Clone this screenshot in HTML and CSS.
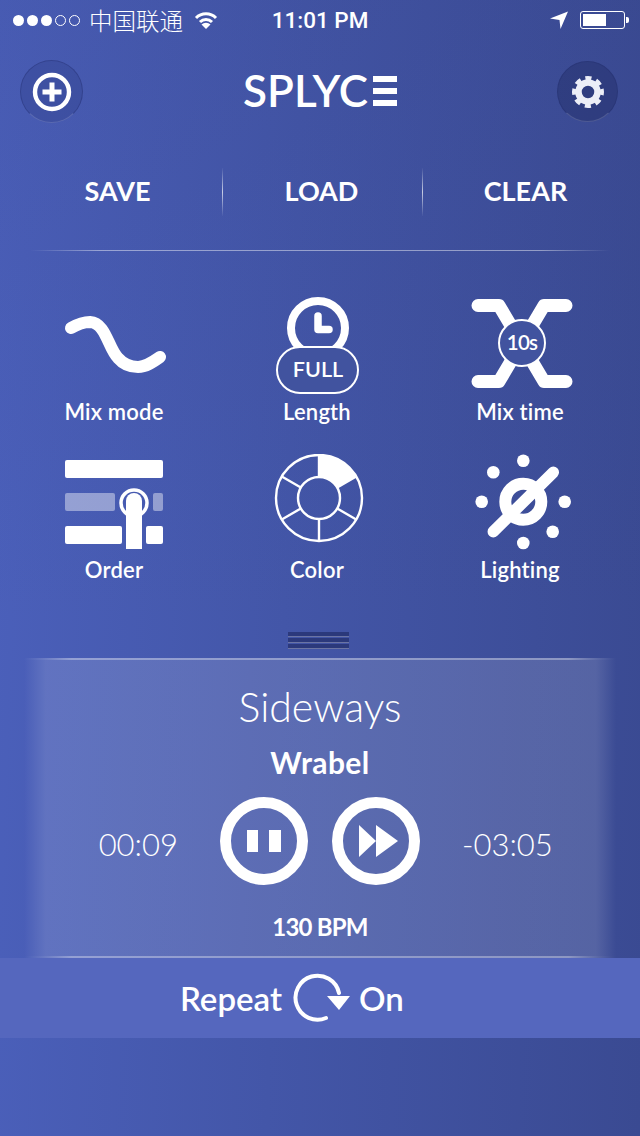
FILE: index.html
```html
<!DOCTYPE html>
<html lang="en">
<head>
    <meta charset="UTF-8">
    <meta name="viewport" content="width=device-width, initial-scale=1.0">
    <title>Splyce</title>
    <link rel="stylesheet" href="styles.css">
</head>
<body>
    <div class="status-bar">
        <div class="status-left">
            <span class="dot"></span><span class="dot"></span><span class="dot"></span><span class="dot empty"></span><span class="dot empty"></span>
            <span class="carrier">中国联通</span>
            <svg class="wifi" width="24" height="18" viewBox="0 0 24 18">
                <path d="M2 7 A14 14 0 0 1 22 7" class="wifi-arc"/>
                <path d="M6 11 A8.5 8.5 0 0 1 18 11" class="wifi-arc"/>
                <path d="M12 18 L7.5 13.5 A6.5 6.5 0 0 1 16.5 13.5 Z" fill="#fff"/>
            </svg>
        </div>
        <div class="clock">11:01 PM</div>
        <div class="status-right">
            <svg width="18" height="18" viewBox="0 0 18 18"><path d="M18 0.5 L0 7.5 L9.5 9 L10.5 18 Z" fill="#fff"/></svg>
            <div class="battery"><div class="battery-level"></div></div>
            <div class="battery-nub"></div>
        </div>
    </div>

    <div class="header">
        <button class="round-btn">
            <svg width="42" height="42" viewBox="0 0 42 42">
                <circle cx="21" cy="21" r="17" class="ring"/>
                <path d="M21 11.5 V30.5 M11.5 21 H30.5" class="plus"/>
            </svg>
        </button>
        <div class="logo">SPLYC<span class="logo-e"><i></i><i></i><i></i></span></div>
        <button class="round-btn dark">
            <svg width="36" height="36" viewBox="0 0 36 36">
                <circle cx="18" cy="18" r="13.5" class="gear-teeth" transform="rotate(-12.3 18 18)"/>
                <circle cx="18" cy="18" r="9.5" class="gear-body"/>
            </svg>
        </button>
    </div>

    <div class="tabs">
        <div class="tab">SAVE</div>
        <div class="tab">LOAD</div>
        <div class="tab">CLEAR</div>
    </div>

    <div class="rule"></div>

    <div class="options">
        <div class="option">
            <svg class="icon" viewBox="0 0 111 100">
                <path d="M11 32 C18 28 24 26 30 26 C46 27 48 52 58 62 C64 69 71 71 78 71 C86 71 93 66 100 61" class="line" stroke-width="12"/>
            </svg>
            <div class="label">Mix mode</div>
        </div>
        <div class="option">
            <svg class="icon" viewBox="0 0 111 100">
                <circle cx="55" cy="32" r="27" class="line" stroke-width="8"/>
                <path d="M55 20 V33.5 H66" class="line" stroke-width="7.5"/>
                <rect x="14" y="51" width="81" height="46" rx="23" class="pill"/>
                <text x="55" y="81" class="icon-text" font-size="21.5">FULL</text>
            </svg>
            <div class="label">Length</div>
        </div>
        <div class="option">
            <svg class="icon" viewBox="0 0 111 100">
                <path d="M12 9.5 H33 L78 85.5 H100 M100 9.5 H78 L33 85.5 H12" class="line" stroke-width="13"/>
                <circle cx="56" cy="47" r="23" class="pill"/>
                <text x="56" y="54" class="icon-text tight" font-size="20.5">10s</text>
            </svg>
            <div class="label">Mix time</div>
        </div>
        <div class="option">
            <svg class="icon" viewBox="0 0 111 100">
                <rect x="5" y="6" width="98" height="18" rx="2" fill="#fff"/>
                <rect x="5" y="39" width="50" height="18" rx="2" fill="#fff" opacity="0.42"/>
                <rect x="93" y="39" width="10" height="18" rx="2" fill="#fff" opacity="0.42"/>
                <rect x="5" y="72" width="57" height="18" rx="2" fill="#fff"/>
                <rect x="86" y="72" width="17" height="18" rx="2" fill="#fff"/>
                <circle cx="74" cy="49" r="13" class="line" stroke-width="3.5"/>
                <path d="M66 47 A8 8 0 0 1 82 47 V95 H66 Z" fill="#fff"/>
            </svg>
            <div class="label">Order</div>
        </div>
        <div class="option">
            <svg class="icon" viewBox="0 0 111 100">
                <circle cx="56" cy="44" r="43" class="line" stroke-width="2.4"/>
                <circle cx="56" cy="44" r="21" class="line" stroke-width="2.4"/>
                <path d="M56 1 V23 M93.2 22.5 L74.2 33.5 M93.2 65.5 L74.2 54.5 M56 87 V65 M18.8 65.5 L37.8 54.5 M18.8 22.5 L37.8 33.5" class="line butt" stroke-width="2.4"/>
                <path d="M56 1 A43 43 0 0 1 93.2 22.5 L74.2 33.5 A21 21 0 0 0 56 23 Z" fill="#fff"/>
            </svg>
            <div class="label">Color</div>
        </div>
        <div class="option">
            <svg class="icon" viewBox="0 0 111 100">
                <circle cx="57.3" cy="47.7" r="18" class="line" stroke-width="12"/>
                <path d="M27.3 77.7 L87.3 18.3" class="line" stroke-width="11.5"/>
                <g fill="#fff">
                    <circle cx="57.3" cy="6.7" r="6.3"/>
                    <circle cx="57.3" cy="89" r="6.3"/>
                    <circle cx="15.7" cy="47.7" r="6.3"/>
                    <circle cx="98.7" cy="47.7" r="6.3"/>
                    <circle cx="27.3" cy="18.3" r="6.3"/>
                    <circle cx="86.7" cy="77.7" r="6.3"/>
                </g>
            </svg>
            <div class="label">Lighting</div>
        </div>
    </div>

    <div class="handle"><span></span><span></span><span></span></div>

    <div class="glow-line"></div>
    <div class="player">
        <div class="song">Sideways</div>
        <div class="artist">Wrabel</div>
        <div class="controls">
            <div class="time left">00:09</div>
            <div class="buttons">
                <svg width="88" height="88" viewBox="0 0 88 88">
                    <circle cx="44" cy="44" r="38.5" class="line" stroke-width="11"/>
                    <rect x="27" y="33" width="11" height="22" fill="#fff"/>
                    <rect x="49" y="33" width="12" height="22" fill="#fff"/>
                </svg>
                <svg width="88" height="88" viewBox="0 0 88 88">
                    <circle cx="44" cy="44" r="38.5" class="line" stroke-width="11"/>
                    <path d="M27 28 L44 44 L44 28 L66 44 L44 60 L44 44 L27 60 Z" fill="#fff"/>
                </svg>
            </div>
            <div class="time right">-03:05</div>
        </div>
        <div class="bpm">130 BPM</div>
    </div>
    <div class="glow-line"></div>

    <div class="repeat">
        <span>Repeat</span>
        <svg class="repeat-icon" width="60" height="50" viewBox="0 0 60 50">
            <path d="M34 46 A22 22 0 1 1 47 21" class="line" stroke-width="4"/>
            <path d="M35 24 H58 L47 38 Z" fill="#fff"/>
        </svg>
        <span>On</span>
    </div>
</body>
</html>
```

FILE: styles.css
```css
html, body {
    height: 100%;
}
body {
    margin: 0;
    width: 640px;
    height: 1136px;
    overflow: hidden;
    color: #fff;
    font-family: Lato, sans-serif;
    background:
        linear-gradient(180deg, rgba(50, 60, 125, 0.14), transparent 55%),
        linear-gradient(92deg, #4b60bb 0%, #4356a8 45%, #3a4a92 100%);
}
.status-bar {
    display: grid;
    grid-template-columns: 1fr auto 1fr;
    align-items: center;
    height: 40px;
    padding: 0 11px 0 13px;
}
.status-left, .status-right {
    display: flex;
    align-items: center;
}
.status-right {
    justify-content: flex-end;
}
.dot {
    width: 11px;
    height: 11px;
    margin-right: 3px;
    border-radius: 50%;
    background: #fff;
    box-sizing: border-box;
}
.dot.empty {
    background: none;
    border: 1px solid #fff;
}
.carrier {
    margin-left: 6px;
    font-family: "Noto Sans CJK SC", sans-serif;
    font-size: 23.5px;
    font-weight: 300;
    line-height: 40px;
}
.wifi {
    margin-left: 11px;
}
.wifi-arc {
    fill: none;
    stroke: #fff;
    stroke-width: 3;
}
.clock {
    margin-left: -2px;
    font-family: Roboto, sans-serif;
    font-size: 22.5px;
    font-weight: 500;
}
.battery {
    width: 45px;
    height: 18px;
    margin-left: 12px;
    padding: 2px;
    border: 1px solid #fff;
    border-radius: 3px;
    box-sizing: border-box;
}
.battery-level {
    width: 23px;
    height: 100%;
    background: #fff;
}
.battery-nub {
    width: 3px;
    height: 6px;
    margin-left: 1px;
    border-radius: 0 2px 2px 0;
    background: #fff;
}

.header {
    display: flex;
    align-items: center;
    justify-content: space-between;
    height: 63px;
    margin-top: 20px;
    padding: 0 22px 0 20px;
}
.round-btn {
    display: flex;
    align-items: center;
    justify-content: center;
    width: 63px;
    height: 63px;
    padding: 0;
    border: 1px solid rgba(35, 45, 110, 0.4);
    border-bottom-color: rgba(255, 255, 255, 0.15);
    border-radius: 50%;
    background: rgba(40, 55, 125, 0.28);
}
.round-btn.dark {
    width: 61px;
    height: 61px;
    background: rgba(30, 40, 95, 0.38);
}
.ring {
    fill: none;
    stroke: #fff;
    stroke-width: 4.4;
}
.plus {
    fill: none;
    stroke: #fff;
    stroke-width: 5;
}
.gear-teeth {
    fill: none;
    stroke: #eceef7;
    stroke-width: 5;
    stroke-dasharray: 5.8 4.8;
}
.gear-body {
    fill: none;
    stroke: #eceef7;
    stroke-width: 6.5;
}
.logo {
    display: flex;
    align-items: center;
    padding-bottom: 2px;
    font-size: 44px;
    line-height: 61px;
    font-weight: 600;
}
.logo-e {
    display: flex;
    flex-direction: column;
    gap: 6px;
    width: 24px;
    margin-left: 5px;
}
.logo-e i {
    height: 6px;
    background: #fff;
}

.tabs {
    display: grid;
    grid-template-columns: 209px 198px 208px;
    height: 48px;
    margin-top: 45px;
    padding-left: 13px;
}
.tab {
    display: flex;
    align-items: center;
    justify-content: center;
    padding-bottom: 4px;
    font-size: 27px;
    font-weight: 700;
}
.tab + .tab {
    border-left: 1px solid;
    border-image: linear-gradient(transparent, rgba(255, 255, 255, 0.7), transparent) 1;
}
.tab:last-child {
    margin-left: 2px;
}
.rule {
    height: 1px;
    margin: 34px 30px 0;
    background: linear-gradient(90deg, transparent, rgba(255, 255, 255, 0.45) 12%, rgba(255, 255, 255, 0.45) 88%, transparent);
}

.options {
    display: grid;
    grid-template-columns: repeat(3, 203px);
    row-gap: 30px;
    margin-top: 45px;
    padding-left: 14px;
}
.option {
    display: flex;
    flex-direction: column;
    align-items: center;
}
.icon {
    display: block;
    width: 111px;
    height: 100px;
}
.line {
    fill: none;
    stroke: #fff;
    stroke-linecap: round;
    stroke-linejoin: round;
}
.line.butt {
    stroke-linecap: butt;
}
.pill {
    fill: #41539f;
    stroke: #fff;
    stroke-width: 2;
}
.icon-text {
    fill: #fff;
    font-family: Lato, sans-serif;
    font-weight: 600;
    text-anchor: middle;
}
.icon-text.tight {
    letter-spacing: -0.8px;
}
.label {
    margin-top: 4px;
    padding-right: 3px;
    font-size: 22px;
    font-weight: 600;
    letter-spacing: 0.2px;
    line-height: 24px;
}

.handle {
    display: flex;
    flex-direction: column;
    gap: 1px;
    width: 61px;
    margin: 50px auto 0 288px;
}
.handle span {
    height: 4px;
    border-bottom: 1px solid rgba(255, 255, 255, 0.3);
    background: rgba(25, 35, 90, 0.55);
}
.glow-line {
    height: 2px;
    margin: 0 24px;
    background: linear-gradient(90deg, transparent, rgba(255, 255, 255, 0.42) 8%, rgba(255, 255, 255, 0.42) 92%, transparent);
}
.handle + .glow-line {
    margin-top: 9px;
}
.player {
    height: 296px;
    background: linear-gradient(90deg, transparent 24px, rgba(255, 255, 255, 0.135) 46px, rgba(255, 255, 255, 0.135) 596px, transparent 616px);
}
.song {
    padding-top: 23px;
    font-size: 41px;
    font-weight: 300;
    line-height: 48px;
    text-align: center;
}
.artist {
    margin-top: 14px;
    font-size: 30px;
    font-weight: 700;
    letter-spacing: 0.4px;
    line-height: 34px;
    text-align: center;
}
.controls {
    display: grid;
    grid-template-columns: 220px auto 1fr;
    align-items: center;
    margin-top: 18px;
}
.time {
    padding: 6px 42px 0;
    font-size: 31px;
    font-weight: 300;
}
.time.left {
    text-align: right;
}
.buttons {
    display: flex;
    gap: 24px;
}
.buttons svg {
    display: block;
}
.bpm {
    margin-top: 27px;
    font-size: 24px;
    font-weight: 700;
    letter-spacing: -0.8px;
    line-height: 30px;
    text-align: center;
}
.repeat {
    display: flex;
    align-items: center;
    height: 80px;
    padding-left: 180px;
    font-size: 33px;
    font-weight: 600;
    background: #5567be;
}
.repeat-icon {
    margin: -2px 7px 0 10px;
}
```
